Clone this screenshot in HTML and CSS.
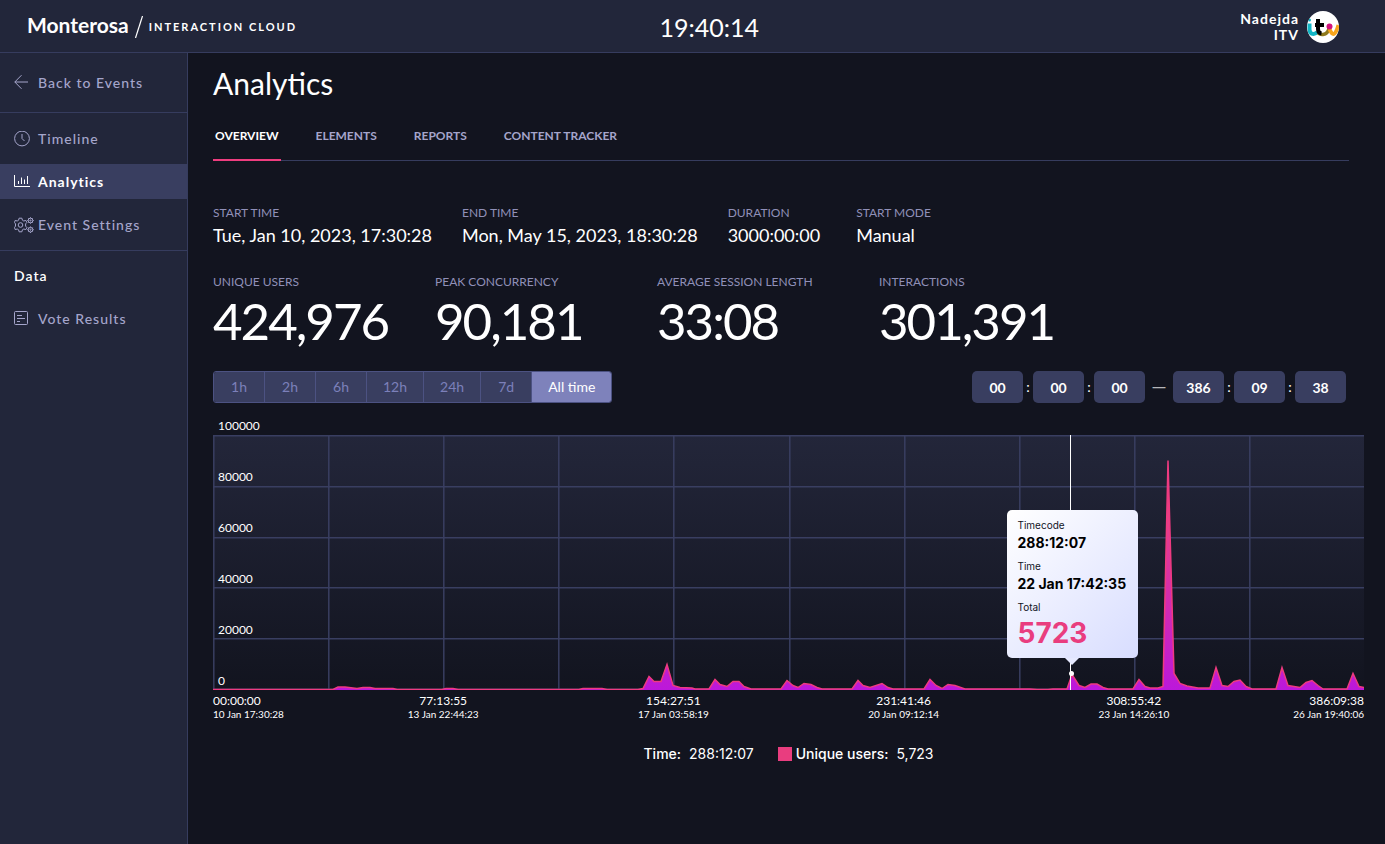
FILE: index.html
```
<!DOCTYPE html>
<html lang="en">
<head>
<meta charset="utf-8">
<title>Analytics - Monterosa / Interaction Cloud</title>
<link rel="stylesheet" href="styles.css">
</head>

<body>
<!-- Header -->
<header class="header">
    <a class="brand" href="#">
        <span class="brand-name">Monterosa</span>
        <svg class="brand-slash" width="8" height="22" viewBox="0 0 8 22"><path d="M7.500 0L.5 22" stroke="#fff" stroke-width="1.200"/></svg>
        <span class="brand-product">INTERACTION CLOUD</span>
    </a>
    <div class="clock">19:40:14</div>
    <div class="account">
        <div class="account-name">Nadejda<br>ITV</div>
        <svg class="avatar" width="32" height="32" viewBox="0 0 32 32">
            <clipPath id="round"><circle cx="16" cy="16" r="16"/></clipPath>
            <circle cx="16" cy="16" r="16" fill="#fff"/>
            <g clip-path="url(#round)" fill="none" stroke-width="4">
                <path d="M2.500 12.500v6q0 4.500 4 4.500 2 0 3.500-2" stroke="#12b5c4"/>
                <path d="M11 22q2.500 2 5 1.500 5-.5 6-6.500" stroke="#8f7a1c" stroke-width="3.500"/>
                <path d="M22.500 18q2 5 4 5 2.500 0 5-9" stroke="#f8a51b"/>
                <path d="M11 8v10q0 4 3.500 4.500M8 14h9" stroke="#000"/>
                <circle cx="22.500" cy="15.500" r="3" fill="#d3127c" stroke="none"/>
                <circle cx="2.500" cy="9" r="1.500" fill="#12b5c4" stroke="none"/>
            </g>
        </svg>
    </div>
</header>

<div class="layout">
    <!-- Sidebar -->
    <nav class="sidebar">
        <div class="nav-group nav-back">
            <a class="nav-link" href="#">
                <svg class="icon" width="20" height="16" viewBox="0 0 20 16"><path d="M14 7H.8M7.500.2L.8 7l6.700 6.800"/></svg>
                Back to Events
            </a>
        </div>
        <div class="nav-group">
            <a class="nav-link" href="#">
                <svg class="icon" width="20" height="16" viewBox="0 0 20 16"><circle cx="8" cy="7.500" r="7.400"/><path d="M8 3v4.500L10.500 10"/></svg>
                Timeline
            </a>
            <a class="nav-link active" href="#">
                <svg class="icon" width="20" height="16" viewBox="0 0 20 16"><path d="M.5 1v11.500H16M4.500 10V7M7.500 10V3.500M10.500 10V5.500M13.500 10V2"/></svg>
                Analytics
            </a>
            <a class="nav-link" href="#">
                <svg class="icon" width="20" height="16" viewBox="0 -.5 20 16">
                    <path d="M5.100 1.200h2.800l.5 2 1.400.8 2-.6 1.100 2-1.300 1.500v2.200l1.300 1.500-1.100 2-2-.6-1.400.8-.5 2H5.100l-.5-2-1.400-.8-2 .6-.7-2 1-1.500V6.900l-1-1.500.7-2 2 .6 1.400-.8z" transform="translate(0 -.5)"/>
                    <circle cx="6.500" cy="7.500" r="2.300"/>
                    <circle cx="16.500" cy="3" r="2.300"/><circle cx="16.500" cy="3" r=".6"/>
                    <circle cx="16.500" cy="12.200" r="2.300"/><circle cx="16.500" cy="12.200" r=".6"/>
                    <path d="M16.500-.2v.9M16.500 5.300v.9M13.300 3h.9M18.800 3h.9M16.500 9v.9M16.500 14.500v.9M13.300 12.200h.9M18.800 12.200h.9M14.300.8l.6.6M18.100 4.600l.6.6M14.300 5.200l.6-.6M18.100 1.400l.6-.6M14.300 10l.6.6M18.100 13.800l.6.6M14.300 14.400l.6-.6M18.100 10.600l.6-.6"/>
                </svg>
                Event Settings
            </a>
        </div>
        <div class="nav-title">Data</div>
        <a class="nav-link" href="#">
            <svg class="icon" width="20" height="16" viewBox="0 0 20 16"><rect x=".5" y=".5" width="13" height="13" rx="1"/><path d="M3 4.500h5M3 7.500h8M3 10.500h3"/></svg>
            Vote Results
        </a>
    </nav>

    <!-- Content -->
    <main class="page">
        <h1>Analytics</h1>
        <nav class="tabs">
            <a class="tab active" href="#">OVERVIEW</a>
            <a class="tab" href="#">ELEMENTS</a>
            <a class="tab" href="#">REPORTS</a>
            <a class="tab" href="#">CONTENT TRACKER</a>
        </nav>

        <dl class="details">
            <div><dt>START TIME</dt><dd>Tue, Jan 10, 2023, 17:30:28</dd></div>
            <div><dt>END TIME</dt><dd>Mon, May 15, 2023, 18:30:28</dd></div>
            <div><dt>DURATION</dt><dd>3000:00:00</dd></div>
            <div><dt>START MODE</dt><dd>Manual</dd></div>
        </dl>

        <dl class="totals">
            <div><dt>UNIQUE USERS</dt><dd>424,976</dd></div>
            <div><dt>PEAK CONCURRENCY</dt><dd>90,181</dd></div>
            <div><dt>AVERAGE SESSION LENGTH</dt><dd>33:08</dd></div>
            <div><dt>INTERACTIONS</dt><dd>301,391</dd></div>
        </dl>

        <div class="controls">
            <div class="periods">
                <button type="button">1h</button>
                <button type="button">2h</button>
                <button type="button">6h</button>
                <button type="button">12h</button>
                <button type="button">24h</button>
                <button type="button">7d</button>
                <button type="button" class="active">All time</button>
            </div>
            <div class="range">
                <input type="text" value="00" aria-label="From hours">
                <span class="colon">:</span>
                <input type="text" value="00" aria-label="From minutes">
                <span class="colon">:</span>
                <input type="text" value="00" aria-label="From seconds">
                <span class="dash">—</span>
                <input type="text" value="386" aria-label="To hours">
                <span class="colon">:</span>
                <input type="text" value="09" aria-label="To minutes">
                <span class="colon">:</span>
                <input type="text" value="38" aria-label="To seconds">
            </div>
        </div>

        <!-- Chart -->
        <div class="chart">
            <svg class="plot" viewBox="0 0 1151 255" preserveAspectRatio="none">
                <defs>
                    <linearGradient id="back" x1="0" y1="0" x2="0" y2="1">
                        <stop offset="0" stop-color="#23263a"/>
                        <stop offset="1" stop-color="#12141f"/>
                    </linearGradient>
                    <linearGradient id="area" x1="0" y1="0" x2="0" y2="1">
                        <stop offset="0" stop-color="#ee3f7e"/>
                        <stop offset=".25" stop-color="#e83f88"/>
                        <stop offset="1" stop-color="#bb17dc"/>
                    </linearGradient>
                </defs>
                <rect width="1151" height="255" fill="url(#back)"/>
                <path class="grid" d="M0 .8H1151M0 51.800H1151M0 102.800H1151M0 152.800H1151M0 203.800H1151M0 254.200H1151M.8 0V255M115.800 0V255M230.800 0V255M345.800 0V255M460.800 0V255M576.800 0V255M691.800 0V255M806.800 0V255M921.800 0V255M1036.800 0V255"/>
                <path class="series" transform="translate(0 .5)" d="M-2 258V254H120L125 251.500H132L144 253L150 252H157L162 253H180L184 254H229L233 253H240L245 254H366L370 253H389L394 254H425L430 253L436 241L441 246H448L454 229L460 250L467 252L479 252.500L482 253.500H496L502 244L507 249L514 251L520 246H526L531 251L538 253.500H568L574 245L580 250L585 252L591 248L598 249L604 252L609 253.500H639L645 245L650 250L657 252L669 248L675 252L680 253.500H711L717 244L723 250L729 253L735 249L742 250L752 253.500H817L824 254H835L840 253.500H854L859 239L866 250L872 252L878 248.500H884L890 252L895 253.500H920L926 244L932 251L937 252.500H945L950 251L955 25L961 238L967 248L974 250.500L985 252.500H997L1003 232L1009 250L1015 251L1021 246L1027 244.500L1033 251L1039 253.500H1063L1069 232L1075 250L1087 252L1093 247L1099 245L1105 250L1110 253.500H1134L1140 238L1146 251L1153 252.500V258Z"/>
            </svg>
            <div class="scale">
                <span>100000</span>
                <span>80000</span>
                <span>60000</span>
                <span>40000</span>
                <span>20000</span>
                <span>0</span>
            </div>
            <div class="cursor">
                <div class="tooltip">
                    <div class="tooltip-label">Timecode</div>
                    <div class="tooltip-value">288:12:07</div>
                    <div class="tooltip-label">Time</div>
                    <div class="tooltip-value">22 Jan 17:42:35</div>
                    <div class="tooltip-label">Total</div>
                    <div class="tooltip-total">5723</div>
                </div>
                <div class="point"></div>
            </div>
        </div>
        <div class="axis">
            <div>00:00:00<small>10 Jan 17:30:28</small></div>
            <div>77:13:55<small>13 Jan 22:44:23</small></div>
            <div>154:27:51<small>17 Jan 03:58:19</small></div>
            <div>231:41:46<small>20 Jan 09:12:14</small></div>
            <div>308:55:42<small>23 Jan 14:26:10</small></div>
            <div>386:09:38<small>26 Jan 19:40:06</small></div>
        </div>
        <div class="legend">
            <div><b>Time:</b>288:12:07</div>
            <div><span class="swatch"></span><b>Unique users:</b>5,723</div>
        </div>
    </main>
</div>
</body>
</html>
```
FILE: styles.css
```
* {
    box-sizing: border-box;
}
body {
    font-family: Lato, "Open Sans", sans-serif;
    font-size: 14px;
    line-height: 20px;
    background: #12141f;
    color: #fff;
    margin: 0;
    min-height: 100vh;
    display: flex;
    flex-direction: column;
}
a {
    color: inherit;
    text-decoration: none;
}
dl, dd, h1 {
    margin: 0;
}

/* Header */
.header {
    display: grid;
    grid-template-columns: 12fr auto 11fr;
    align-items: center;
    height: 53px;
    padding: 1px 46px 0 27px;
    background: #22263a;
    border-bottom: 1px solid #363c5e;
}
.brand {
    display: flex;
    align-items: center;
    gap: 6px;
}
.brand-name {
    font-size: 21px;
    font-weight: bold;
    line-height: 24px;
    padding-bottom: 4px;
}
.brand-product {
    font-size: 11px;
    font-weight: bold;
    letter-spacing: 2px;
}
.clock {
    font-size: 25px;
    line-height: 32px;
}
.account {
    display: flex;
    align-items: center;
    justify-content: flex-end;
    gap: 8px;
}
.account-name {
    font-weight: bold;
    line-height: 16px;
    letter-spacing: 1px;
    text-align: right;
}

/* Sidebar */
.layout {
    display: flex;
    flex: 1;
}
.sidebar {
    flex: none;
    width: 188px;
    background: #22263a;
    border-right: 1px solid #363c5e;
    color: #a5a5cb;
    letter-spacing: 1px;
}
.nav-group {
    padding: 8px 0;
    border-bottom: 1px solid #363c5e;
}
.nav-back {
    padding: 12px 0;
}
.nav-link {
    display: flex;
    align-items: center;
    gap: 4px;
    height: 35px;
    padding: 0 14px;
    font-weight: 500;
}
.nav-link + .nav-link {
    margin-top: 8px;
}
.nav-link.active {
    background: #393e60;
    color: #fff;
    font-weight: bold;
}
.nav-title {
    color: #fff;
    font-weight: 600;
    padding: 15px 14px;
}
.icon {
    flex: none;
    fill: none;
    stroke: currentColor;
    stroke-width: 1;
}

/* Content */
.page {
    flex: 1;
    min-width: 0;
    padding: 10px 21px 40px 25px;
}
h1 {
    font-size: 30px;
    font-weight: normal;
    line-height: 40px;
}
.tabs {
    display: flex;
    gap: 33px;
    margin: 10px 15px 0 0;
    border-bottom: 1px solid #363c5e;
}
.tab {
    padding: 13px 2px;
    margin-bottom: -1px;
    border-bottom: 2px solid transparent;
    color: #a5a5cb;
    font-size: 12px;
    font-weight: bold;
}
.tab.active {
    color: #fff;
    border-color: #ee3d7f;
}
dt {
    color: #9090b8;
    font-size: 12px;
    line-height: 16px;
}
.details {
    display: flex;
    gap: 30px;
    margin-top: 44px;
}
.details dd {
    font-size: 18px;
    line-height: 28px;
}
.details div:nth-child(3) {
    margin-right: 6px;
}
.totals {
    display: flex;
    margin-top: 25px;
}
.totals div {
    width: 222px;
}
.totals dd {
    font-size: 51px;
    line-height: 62px;
    letter-spacing: -2px;
}

.controls {
    display: flex;
    justify-content: space-between;
    margin: 19px 18px 32px 0;
}
.periods {
    display: flex;
    border: 1px solid #4c5282;
    border-radius: 3px;
    overflow: hidden;
}
.periods button {
    height: 30px;
    min-width: 51px;
    padding: 0 16px;
    border: 0;
    border-right: 1px solid #4c5282;
    background: #393e60;
    color: #7c80ba;
    font: 14px/20px Lato, sans-serif;
}
.periods .active {
    border: 0;
    background: #7e82bb;
    color: #fff;
}
.range {
    display: flex;
    align-items: center;
}
.range input {
    width: 51px;
    height: 32px;
    padding: 0;
    border: 0;
    border-radius: 5px;
    background: #393e60;
    color: #fff;
    font: bold 14px/20px Lato, sans-serif;
    text-align: center;
}
.colon {
    width: 10px;
    text-align: center;
}
.dash {
    width: 28px;
    color: #b4b5b9;
    font-family: "Open Sans", sans-serif;
    text-align: center;
}

/* Chart */
.chart {
    position: relative;
    height: 255px;
}
.plot {
    display: block;
    width: 100%;
    height: 100%;
}
.grid {
    fill: none;
    stroke: #393e61;
    stroke-width: 1.5;
}
.series {
    fill: url(#area);
    stroke: #ee3a80;
    stroke-width: 1.5;
}
.scale {
    position: absolute;
    top: -17px;
    left: 5px;
    display: grid;
    grid-auto-rows: 51px;
    font-size: 12px;
    line-height: 16px;
}
.cursor {
    position: absolute;
    top: 0;
    bottom: 0;
    left: 74.5%;
    width: 1px;
    background: #fff;
}
.tooltip {
    position: absolute;
    bottom: 32px;
    left: -63px;
    width: 131px;
    padding: 7px 10px;
    border-radius: 5px;
    background: linear-gradient(135deg, #fff, #d8ddff);
    color: #12141f;
    font-family: Inter, sans-serif;
    white-space: nowrap;
}
.tooltip:after {
    content: "";
    position: absolute;
    top: 100%;
    left: 58px;
    border: 7px solid transparent;
    border-top-color: #e6e9ff;
    border-bottom: 0;
}
.tooltip-label {
    font-size: 10px;
    line-height: 16px;
}
.tooltip-value {
    color: #000;
    font-size: 14px;
    font-weight: bold;
    line-height: 20px;
    margin-bottom: 5px;
}
.tooltip-total {
    color: #e93d7f;
    font-size: 28px;
    font-weight: bold;
    line-height: 36px;
}
.point {
    position: absolute;
    bottom: 14px;
    left: -1px;
    width: 5px;
    height: 5px;
    border-radius: 50%;
    background: #fff;
}
.axis {
    display: grid;
    grid-template-columns: 1fr 2fr 2fr 2fr 2fr 1fr;
    margin-top: 4px;
    font-size: 12px;
    line-height: 14px;
    text-align: center;
    white-space: nowrap;
}
.axis small {
    display: block;
    font-size: 10px;
    line-height: 13px;
}
.axis div:first-child {
    text-align: left;
}
.axis div:last-child {
    text-align: right;
}
.legend {
    display: flex;
    justify-content: center;
    gap: 24px;
    margin-top: 23px;
    font-family: Inter, sans-serif;
}
.legend div {
    display: flex;
    align-items: center;
}
.legend b {
    font-weight: 500;
    margin-right: 8px;
}
.swatch {
    width: 14px;
    height: 14px;
    margin-right: 4px;
    background: #e93d7f;
}
```
